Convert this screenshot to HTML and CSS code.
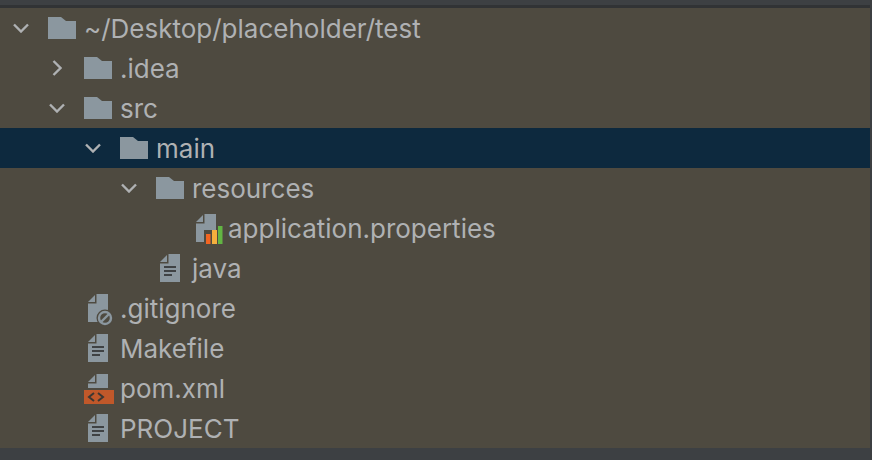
FILE: index.html
```
<!DOCTYPE html>
<html lang="en">
<head>
<meta charset="utf-8">
<title>Project tree</title>
<link rel="stylesheet" href="styles.css">
</head>
<body>
<svg class="defs" width="0" height="0" aria-hidden="true">
  <symbol id="chev-down" viewBox="0 0 18 10"><path d="M2 1.500 9 8.500 16 1.500" fill="none" stroke="currentColor" stroke-width="2.400"/></symbol>
  <symbol id="chev-right" viewBox="0 0 10 18"><path d="M1.500 2 8.500 9 1.500 16" fill="none" stroke="currentColor" stroke-width="2.400"/></symbol>
  <symbol id="folder" viewBox="0 0 28 22"><path d="M0 0H13L18 4H28V22H0Z" fill="#8b979f"/></symbol>
  <symbol id="file" viewBox="0 0 28 28"><path d="M4 8 11 1V8Z" fill="#8b979f"/><path d="M12.500 0H24V28H4V9.500H12.500Z" fill="#8b979f"/><path d="M8 13H20M8 17H20M8 21H16" stroke="#3f4244" stroke-width="2"/></symbol>
</svg>
<div class="top"><div class="top-line"></div></div>
<ul class="tree">
  <li class="row l0"><span class="chev"><svg class="cd"><use href="#chev-down"/></svg></span><svg class="ico"><use href="#folder"/></svg><span class="name">~/Desktop/placeholder/test</span></li>
  <li class="row l1"><span class="chev"><svg class="cr"><use href="#chev-right"/></svg></span><svg class="ico"><use href="#folder"/></svg><span class="name">.idea</span></li>
  <li class="row l1"><span class="chev"><svg class="cd"><use href="#chev-down"/></svg></span><svg class="ico"><use href="#folder"/></svg><span class="name">src</span></li>
  <li class="row l2 sel"><span class="chev"><svg class="cd"><use href="#chev-down"/></svg></span><svg class="ico"><use href="#folder"/></svg><span class="name">main</span></li>
  <li class="row l3"><span class="chev"><svg class="cd"><use href="#chev-down"/></svg></span><svg class="ico"><use href="#folder"/></svg><span class="name">resources</span></li>
  <li class="row l4"><span class="chev"></span>
    <svg class="ico file" viewBox="0 0 28 28"><path d="M4 8 11 1V8Z" fill="#8b979f"/><path d="M12.500 0H24V16H12V28H4V9.500H12.500Z" fill="#8b979f"/><rect x="14" y="20" width="4.500" height="10" fill="#f26522"/><rect x="20" y="16" width="5" height="14" fill="#f4af3d"/><rect x="26" y="12" width="4.500" height="18" fill="#62b543"/></svg>
    <span class="name">application.properties</span></li>
  <li class="row l3"><span class="chev"></span><svg class="ico file"><use href="#file"/></svg><span class="name">java</span></li>
  <li class="row l1"><span class="chev"></span>
    <svg class="ico file" viewBox="0 0 28 28"><path d="M4 8 11 1V8Z" fill="#8b979f"/><path d="M12.500 0H24V28H4V9.500H12.500Z" fill="#8b979f"/><circle cx="21" cy="24" r="8.500" fill="#4e4a40"/><circle cx="21" cy="24" r="6" fill="none" stroke="#8b979f" stroke-width="2.400"/><path d="M17 28 25 20" stroke="#8b979f" stroke-width="2.400"/></svg>
    <span class="name">.gitignore</span></li>
  <li class="row l1"><span class="chev"></span><svg class="ico file"><use href="#file"/></svg><span class="name">Makefile</span></li>
  <li class="row l1"><span class="chev"></span>
    <svg class="ico file" viewBox="0 0 28 28"><path d="M4 8 11 1V8Z" fill="#8b979f"/><path d="M12.500 0H24V14H4V9.500H12.500Z" fill="#8b979f"/><rect x="0" y="16" width="30" height="14" fill="#c0582a"/><path d="M10 19 5 23 10 27M14 19 19 23 14 27" fill="none" stroke="#3a3733" stroke-width="2"/></svg>
    <span class="name">pom.xml</span></li>
  <li class="row l1"><span class="chev"></span><svg class="ico file"><use href="#file"/></svg><span class="name">PROJECT</span></li>
</ul>
<div class="bottom"></div>
</body>
</html>
```
FILE: styles.css
```
* { box-sizing: border-box; }
html, body { margin: 0; height: 100%; }
body {
  width: 872px; height: 460px; overflow: hidden;
  background: #4e4a40;
  display: flex; flex-direction: column;
  border-right: 2px solid #3c3f41;
  font-family: Inter, "Liberation Sans", sans-serif;
}
.defs { position: absolute; }
.top { height: 8px; background: #3d4043; flex: none; padding-top: 5px; }
.top-line { height: 3px; background: #313335; }
.tree { list-style: none; margin: 0; padding: 0; flex: 1; }
.row {
  height: 40px; display: flex; align-items: center;
  color: #afb1b3; font-size: 26px; line-height: 40px;
  width: 872px;
}
.l0 { padding-left: 3px; }
.l1 { padding-left: 39px; }
.l2 { padding-left: 75px; }
.l3 { padding-left: 111px; }
.l4 { padding-left: 147px; }
.sel { background: #0d293e; }
.chev { width: 36px; height: 40px; flex: none; display: flex; align-items: center; justify-content: center; }
.cd { width: 18px; height: 10px; }
.cr { width: 10px; height: 18px; }
.ico { width: 28px; height: 22px; flex: none; margin-left: 9px; margin-right: 8px; }
.ico.file { height: 28px; overflow: visible; }
.name { white-space: nowrap; position: relative; top: 1px; }
.bottom { height: 12px; background: #3d4043; flex: none; }
```
